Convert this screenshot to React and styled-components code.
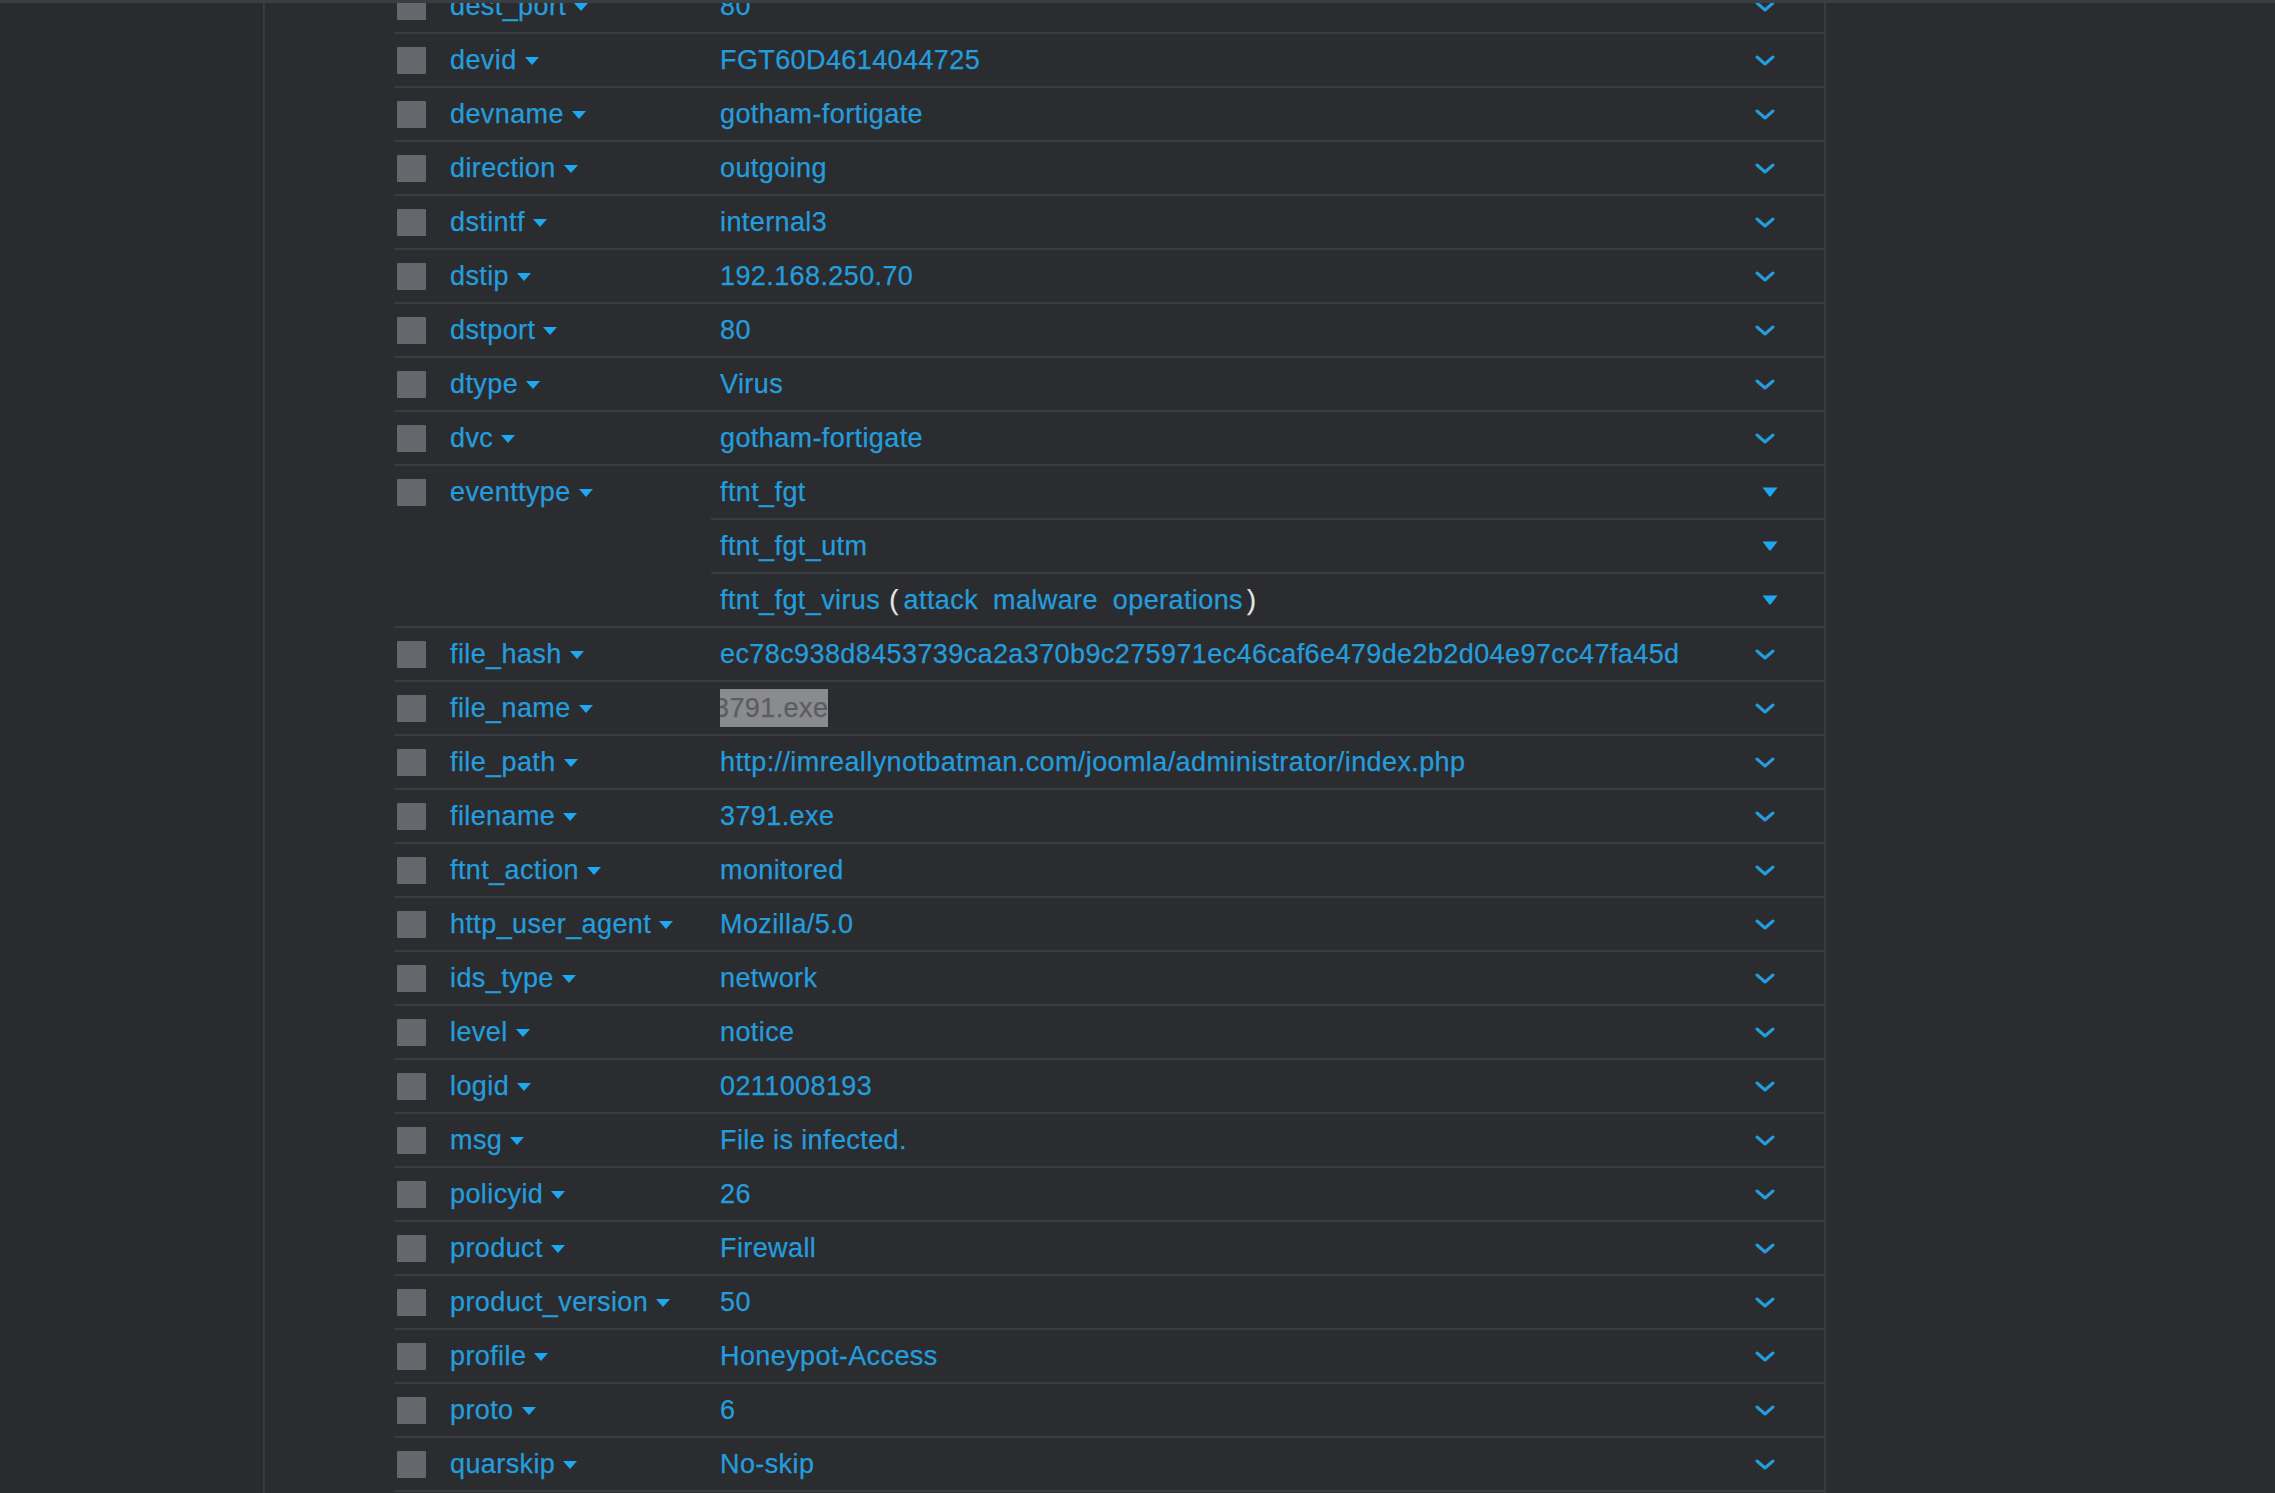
import React from "react";
import styled, { createGlobalStyle } from "styled-components";

// ------------------------
// Global
// ------------------------
const GlobalStyle = createGlobalStyle`
  html, body {
    margin: 0;
    padding: 0;
    background: #2a2c30;
    overflow: hidden;
  }
  body {
    font-family: "Liberation Sans", Arial, sans-serif;
  }
`;

const BLUE = "#259ddc";
const LINE = "#383b40";

// ------------------------
// Styled-components
// ------------------------
const TopStrip = styled.div`
  position: fixed;
  top: 0;
  left: 0;
  right: 0;
  height: 3px;
  background: #3a3d42;
  z-index: 2;
`;

const Page = styled.div`
  display: flex;
  height: 1493px;
  overflow: hidden;
`;

const Sidebar = styled.div`
  width: 263px;
  flex-shrink: 0;
  background: #292b2f;
  border-right: 2px solid #383b40;
`;

const Main = styled.div`
  flex: 1;
  display: flex;
  padding-left: 130px;
`;

const Table = styled.div`
  width: 1429px;
  border-right: 2px solid ${LINE};
  background: #2a2c30;
`;

const Rows = styled.div`
  margin-top: -20px;
`;

const Row = styled.div`
  display: flex;
  height: 54px;
`;

const KeyCell = styled.div`
  width: 316px;
  flex-shrink: 0;
  display: flex;
  align-items: center;
  padding-left: 2px;
  box-sizing: border-box;
  border-bottom: 2px solid ${(p) => (p.$open ? "transparent" : LINE)};
`;

const Checkbox = styled.span`
  width: 29px;
  height: 27px;
  background: #65676c;
  border-radius: 1px;
  flex-shrink: 0;
`;

const FieldName = styled.span`
  margin-left: 24px;
  font-size: 27px;
  letter-spacing: 0.4px;
  -webkit-text-stroke: 0.25px ${BLUE};
  color: ${BLUE};
  display: flex;
  align-items: center;
  white-space: nowrap;
`;

const Caret = styled.svg`
  margin-left: 8px;
  margin-top: 2px;
`;

const ValueCell = styled.div`
  flex: 1;
  display: flex;
  align-items: center;
  justify-content: space-between;
  padding: 0 46px 0 9px;
  border-bottom: 2px solid ${LINE};
  min-width: 0;
`;

const Value = styled.span`
  font-size: 27px;
  letter-spacing: 0.4px;
  -webkit-text-stroke: 0.25px ${BLUE};
  color: ${BLUE};
  white-space: nowrap;
  display: flex;
  align-items: center;
`;

const Highlight = styled.span`
  display: inline-block;
  overflow: hidden;
  background: #8a8b8e;
  color: #5c5d61;
  -webkit-text-stroke: 0.25px #5c5d61;
  padding: 4px 0;
  text-indent: -6px;
  line-height: 30px;
`;

const Paren = styled.span`
  color: #e6e6e6;
  -webkit-text-stroke: 0.25px #e6e6e6;
  margin: ${(p) => (p.$close ? "0 0 0 4px" : "0 5px 0 9px")};
`;

const Tags = styled.span`
  display: inline-flex;
  gap: 15px;
`;

const Chevron = styled.svg`
  margin-right: 3px;
  flex-shrink: 0;
`;

const Triangle = styled.svg`
  flex-shrink: 0;
`;

// ------------------------
// Data
// ------------------------
const fields = [
  { name: "dest_port", value: "80" },
  { name: "devid", value: "FGT60D4614044725" },
  { name: "devname", value: "gotham-fortigate" },
  { name: "direction", value: "outgoing" },
  { name: "dstintf", value: "internal3" },
  { name: "dstip", value: "192.168.250.70" },
  { name: "dstport", value: "80" },
  { name: "dtype", value: "Virus" },
  { name: "dvc", value: "gotham-fortigate" },
  {
    name: "eventtype",
    values: ["ftnt_fgt", "ftnt_fgt_utm", "ftnt_fgt_virus"],
    tags: ["attack", "malware", "operations"],
  },
  {
    name: "file_hash",
    value: "ec78c938d8453739ca2a370b9c275971ec46caf6e479de2b2d04e97cc47fa45d",
  },
  { name: "file_name", value: "3791.exe", selected: true },
  {
    name: "file_path",
    value: "http://imreallynotbatman.com/joomla/administrator/index.php",
  },
  { name: "filename", value: "3791.exe" },
  { name: "ftnt_action", value: "monitored" },
  { name: "http_user_agent", value: "Mozilla/5.0" },
  { name: "ids_type", value: "network" },
  { name: "level", value: "notice" },
  { name: "logid", value: "0211008193" },
  { name: "msg", value: "File is infected." },
  { name: "policyid", value: "26" },
  { name: "product", value: "Firewall" },
  { name: "product_version", value: "50" },
  { name: "profile", value: "Honeypot-Access" },
  { name: "proto", value: "6" },
  { name: "quarskip", value: "No-skip" },
  { name: "rcvdbyte", value: "0" },
];

// ------------------------
// Icons
// ------------------------
const CaretIcon = () => (
  <Caret width="14" height="8" viewBox="0 0 14 8">
    <path d="M0 0 H14 L7 8 Z" fill="#1ea8f2" />
  </Caret>
);

const ChevronIcon = () => (
  <Chevron width="20" height="11" viewBox="0 0 20 11">
    <path
      d="M2 2 L10 9 L18 2"
      fill="none"
      stroke={BLUE}
      strokeWidth="3"
      strokeLinecap="round"
      strokeLinejoin="round"
    />
  </Chevron>
);

const TriangleIcon = () => (
  <Triangle width="16" height="10" viewBox="0 0 16 10">
    <path d="M0.5 0.5 H15.5 L9 9 Q8 10 7 9 Z" fill="#1ea8f2" />
  </Triangle>
);

// ------------------------
// Componentes
// ------------------------
function FieldKey({ name, open }) {
  return (
    <KeyCell $open={open}>
      {name && (
        <>
          <Checkbox />
          <FieldName>
            {name}
            <CaretIcon />
          </FieldName>
        </>
      )}
    </KeyCell>
  );
}

function FieldRow({ field }) {
  if (field.values) {
    const last = field.values.length - 1;
    return field.values.map((v, i) => (
      <Row key={v}>
        <FieldKey name={i === 0 ? field.name : null} open={i < last} />
        <ValueCell>
          <Value>
            {v}
            {i === last && field.tags && (
              <>
                <Paren>(</Paren>
                <Tags>
                  {field.tags.map((t) => (
                    <span key={t}>{t}</span>
                  ))}
                </Tags>
                <Paren $close>)</Paren>
              </>
            )}
          </Value>
          <TriangleIcon />
        </ValueCell>
      </Row>
    ));
  }

  return (
    <Row>
      <FieldKey name={field.name} />
      <ValueCell>
        <Value>
          {field.selected ? <Highlight>{field.value}</Highlight> : field.value}
        </Value>
        <ChevronIcon />
      </ValueCell>
    </Row>
  );
}

export default function App() {
  return (
    <>
      <GlobalStyle />
      <TopStrip />
      <Page>
        <Sidebar />
        <Main>
          <Table>
            <Rows>
              {fields.map((f) => (
                <FieldRow key={f.name} field={f} />
              ))}
            </Rows>
          </Table>
        </Main>
      </Page>
    </>
  );
}
